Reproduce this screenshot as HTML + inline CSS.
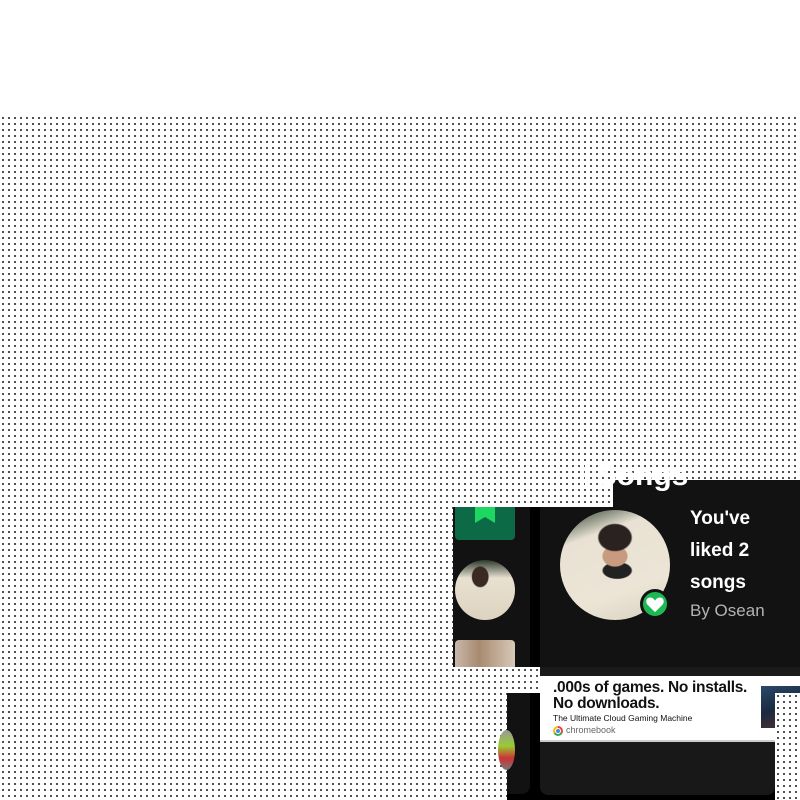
<!DOCTYPE html>
<html><head><style>
*{margin:0;padding:0;box-sizing:border-box}
body{width:800px;height:800px;overflow:hidden;position:relative;background:#fff;font-family:"Liberation Sans",sans-serif}
.dots{position:absolute;left:0;top:115px;width:800px;height:685px;
background-image:radial-gradient(circle,#000 0.75px,transparent 1.05px);
background-size:6px 6px;background-position:0 0}
.a{position:absolute}
.d{background:#121212}
</style></head><body>
<div class="dots"></div>
<div class="a" style="left:453px;top:507px;width:160px;height:160px;background:#000"></div>
<div class="a d" style="left:453px;top:507px;width:77px;height:160px"></div>
<div class="a d" style="left:540px;top:507px;width:73px;height:160px"></div>
<div class="a d" style="left:613px;top:480px;width:187px;height:187px"></div>
<div class="a" style="left:585px;top:462px;width:140px;height:30px;overflow:hidden">
 <div class="a" style="left:-15px;top:-3px;color:#fff;font-weight:bold;font-size:30px;white-space:nowrap">d Songs</div>
</div>
<div class="a" style="left:540px;top:667px;width:260px;height:9px;background:#1a1a1a"></div>
<div class="a" style="left:507px;top:693px;width:268px;height:107px;background:#000"></div>
<div class="a d" style="left:507px;top:693px;width:23px;height:101px;border-radius:0 0 8px 0"></div>
<div class="a" style="left:540px;top:693px;width:235px;height:102px;background:#181818;border-radius:0 0 8px 8px"></div>
<div class="a" style="left:498px;top:730px;width:17px;height:40px;border-radius:50%;background:linear-gradient(#999,#9c3 40%,#c33 70%,#777)"></div>
<div class="a" style="left:455px;top:507px;width:60px;height:33px;background:#0c6a46;border-radius:0 0 4px 4px"></div>
<svg class="a" style="left:475px;top:507px" width="20" height="16" viewBox="0 0 20 16"><path d="M0 0H20V16L10 10L0 16Z" fill="#1ed760"/></svg>
<div class="a" style="left:455px;top:560px;width:60px;height:60px;border-radius:50%;background:radial-gradient(ellipse at 42% 28%,#3a2a22 0 16%,transparent 18%),linear-gradient(#2d3a2d 0,#e8e0d0 30%,#ddd3c0)"></div>
<div class="a" style="left:455px;top:640px;width:60px;height:27px;border-radius:4px 4px 0 0;background:linear-gradient(90deg,#c9b8aa,#a88a70 40%,#d8c8b8)"></div>
<div class="a" style="left:560px;top:510px;width:110px;height:110px;border-radius:50%;background:radial-gradient(ellipse 16% 13% at 50% 25%,#2a2220 0 90%,transparent 100%),radial-gradient(ellipse 12% 10% at 50% 42%,#c89a80 0 90%,transparent 100%),radial-gradient(ellipse 14% 8% at 52% 55%,#222 0 90%,transparent 100%),linear-gradient(160deg,#1f3322 0,#e9e2d4 25%,#ece5d6 70%,#d8cfc0)"></div>
<div class="a" style="left:640px;top:589px;width:30px;height:30px;border-radius:50%;background:#1db954;border:3px solid #121212"></div>
<svg class="a" style="left:645px;top:595px" width="20" height="18" viewBox="0 0 24 22"><path d="M12 21L3 12C0 9 1 3 6 3C9 3 11 5 12 7C13 5 15 3 18 3C23 3 24 9 21 12Z" fill="#fff"/></svg>
<div class="a" style="left:690px;top:503px;color:#fff;font-weight:bold;font-size:19px;line-height:32px">You've<br>liked 2<br>songs</div>
<div class="a" style="left:690px;top:601px;color:#b3b3b3;font-size:17px">By Osean</div>
<div class="a" style="left:540px;top:676px;width:260px;height:66px;background:#fff;border-bottom:2px solid #ccc"></div>
<div class="a" style="left:553px;top:680px;color:#111;font-weight:bold;font-size:15.5px;line-height:16px;letter-spacing:-0.3px">.000s of games. No installs.<br>No downloads.</div>
<div class="a" style="left:553px;top:713px;color:#111;font-size:8.5px">The Ultimate Cloud Gaming Machine</div>
<div class="a" style="left:553px;top:726px;width:10px;height:10px;border-radius:50%;background:conic-gradient(#ea4335 0 33%,#34a853 33% 66%,#fbbc05 66%)"></div>
<div class="a" style="left:556px;top:729px;width:4px;height:4px;border-radius:50%;background:#4285f4;outline:1px solid #fff"></div>
<div class="a" style="left:566px;top:725px;color:#666;font-size:9px">chromebook</div>
<div class="a" style="left:761px;top:686px;width:39px;height:42px;background:linear-gradient(160deg,#2a4a6a,#1a2a40 50%,#5a3030)"></div>
<div class="a" style="left:775px;top:693px;width:25px;height:107px;background:#fff;background-image:radial-gradient(circle,#000 0.75px,transparent 1.05px);background-size:6px 6px"></div>
</body></html>
